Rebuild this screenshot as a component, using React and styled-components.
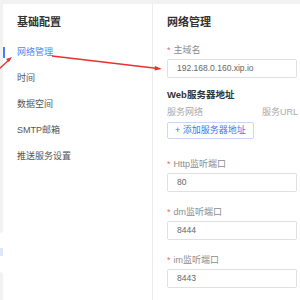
import React from "react";
import styled, { createGlobalStyle } from "styled-components";

const GlobalStyle = createGlobalStyle`
  html, body {
    margin: 0;
    padding: 0;
    background: #ffffff;
    font-family: "Liberation Sans", "Noto Sans CJK SC", sans-serif;
  }
  #root {
    width: 300px;
    height: 300px;
    overflow: hidden;
  }
`;

const Page = styled.div`
  position: relative;
  width: 300px;
  height: 300px;
  display: flex;
  flex-direction: column;
  background: #ffffff;
  overflow: hidden;
`;

const TopStrip = styled.div`
  height: 4px;
  flex: none;
  background: #f2f2f2;
`;

const Body = styled.div`
  flex: 1;
  display: flex;
`;

const Sliver = styled.div`
  width: 3px;
  flex: none;
  display: flex;
  flex-direction: column;
`;

const SliverBlock = styled.div`
  height: ${(p) => p.h}px;
  flex: none;
  background: ${(p) => p.color || "#f2f2f2"};
  border-radius: ${(p) => p.radius || "0"};
  margin-top: ${(p) => p.mt || 0}px;
`;

const Menu = styled.div`
  width: 150px;
  flex: none;
  border-right: 1px solid #ececec;
  border-top-left-radius: 4px;
  padding-top: 11px;
  box-sizing: border-box;
`;

const MenuTitle = styled.div`
  font-size: 11px;
  line-height: 14px;
  font-weight: bold;
  color: #333;
  padding-left: 14px;
  margin-bottom: 10px;
`;

const MenuItem = styled.div`
  position: relative;
  height: 26px;
  line-height: 26px;
  font-size: 9px;
  padding-left: 14px;
  color: ${(p) => (p.active ? "#5585f7" : "#555")};

  &::before {
    content: "";
    display: ${(p) => (p.active ? "block" : "none")};
    position: absolute;
    left: 0;
    top: 8px;
    width: 2px;
    height: 11px;
    background: #4a7cf7;
  }
`;

const Content = styled.div`
  flex: 1;
  padding: 11px 0 0 14px;
`;

const Title = styled.div`
  font-size: 11px;
  line-height: 14px;
  font-weight: bold;
  color: #333;
  margin-bottom: 15px;
`;

const Field = styled.div`
  margin-bottom: 14px;
`;

const Label = styled.div`
  font-size: 9px;
  line-height: 12px;
  color: #8c8c8c;
  margin-bottom: 3px;

  & span {
    color: #f26b6b;
    margin-right: 3px;
  }
`;

const Input = styled.div`
  height: 19px;
  box-sizing: border-box;
  border: 1px solid #e0e0e0;
  border-radius: 2px;
  font-size: 8.5px;
  line-height: 17px;
  padding-left: 9px;
  color: #666;
  width: 130px;
`;

const SectionTitle = styled.div`
  font-size: 9.5px;
  line-height: 12px;
  font-weight: bold;
  color: #333;
  margin-top: -3px;
  margin-bottom: 5px;
`;

const ColHeads = styled.div`
  display: flex;
  font-size: 9px;
  line-height: 12px;
  color: #aaa;
  margin-bottom: 4px;

  & span:first-child {
    width: 95px;
  }
`;

const AddButton = styled.div`
  width: 87px;
  height: 17px;
  box-sizing: border-box;
  border: 1px solid #c9d7f8;
  border-radius: 2px;
  font-size: 9px;
  line-height: 15px;
  color: #4373f0;
  text-align: center;
  margin-bottom: 19px;
`;

const Overlay = styled.svg`
  position: absolute;
  left: 0;
  top: 0;
  pointer-events: none;
`;

const fields = [
  { label: "Http监听端口", value: "80" },
  { label: "dm监听端口", value: "8444" },
  { label: "im监听端口", value: "8443" },
];

const App = () => (
  <>
    <GlobalStyle />
    <Page>
      <TopStrip />
      <Body>
        <Sliver>
          <SliverBlock h={229} radius="0 0 3px 0" />
          <SliverBlock h={8} mt={15} color="#dfe6f7" />
          <SliverBlock h={30} mt={16} radius="0 3px 0 0" />
        </Sliver>
        <Menu>
          <MenuTitle>基础配置</MenuTitle>
          <MenuItem active>网络管理</MenuItem>
          <MenuItem>时间</MenuItem>
          <MenuItem>数据空间</MenuItem>
          <MenuItem>SMTP邮箱</MenuItem>
          <MenuItem>推送服务设置</MenuItem>
        </Menu>
        <Content>
          <Title>网络管理</Title>
          <Field>
            <Label><span>*</span>主域名</Label>
            <Input>192.168.0.160.xip.io</Input>
          </Field>
          <SectionTitle>Web服务器地址</SectionTitle>
          <ColHeads>
            <span>服务网络</span>
            <span>服务URL</span>
          </ColHeads>
          <AddButton>+ 添加服务器地址</AddButton>
          {fields.map((f) => (
            <Field key={f.label}>
              <Label><span>*</span>{f.label}</Label>
              <Input>{f.value}</Input>
            </Field>
          ))}
        </Content>
      </Body>
      <Overlay width="300" height="300" viewBox="0 0 300 300">
        <g stroke="#e8302c" strokeWidth="1.3" fill="none">
          <line x1="-2" y1="70" x2="10" y2="59" />
          <line x1="52" y1="56" x2="158" y2="68.5" />
        </g>
        <g fill="#e8302c">
          <polygon points="12,57 6,59 9,62" />
          <polygon points="162,69 155,66 154.5,70.5" />
        </g>
      </Overlay>
    </Page>
  </>
);

export default App;
